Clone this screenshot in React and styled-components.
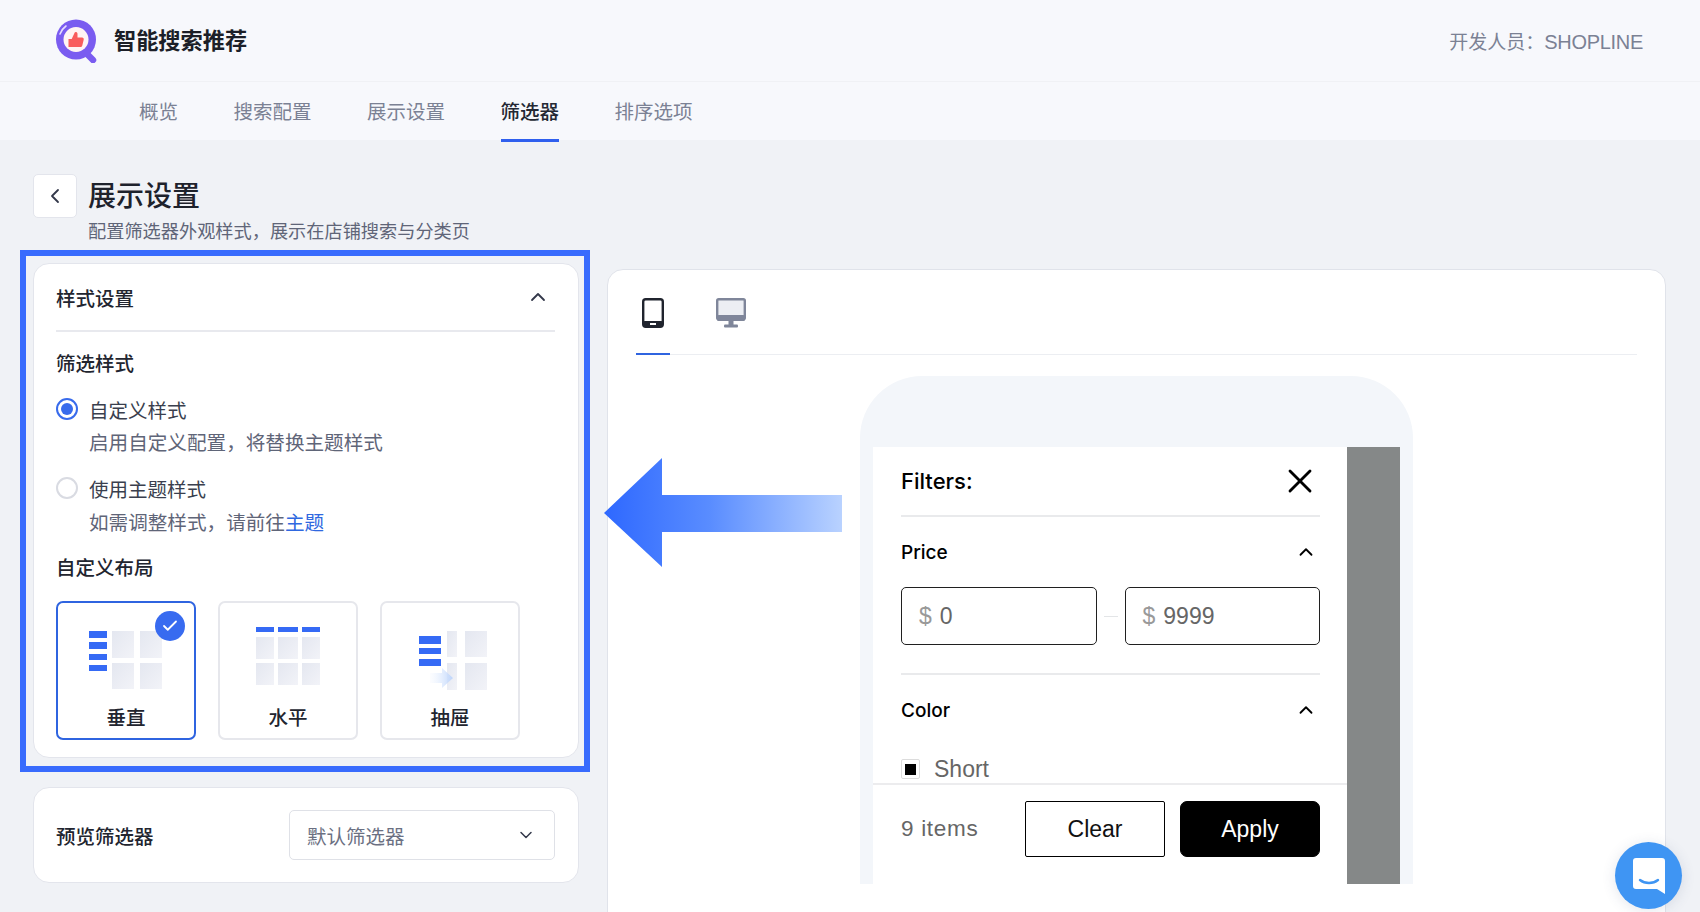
import React from 'react';
import styled, { createGlobalStyle } from 'styled-components';
import { ChevronUp, ChevronDown, ChevronLeft, X, Check } from 'lucide-react';

const cjk = '"Noto Sans CJK SC", "Noto Sans", sans-serif';
const latin = '"Liberation Sans", "Noto Sans CJK SC", sans-serif';

const GlobalStyle = createGlobalStyle`
  html, body { margin: 0; padding: 0; background: #f0f2f6; }
  body { font-family: ${cjk}; color: #20242e; }
  * { box-sizing: border-box; }
`;

const Page = styled.div`
  position: relative;
  width: 1700px;
  height: 912px;
  overflow: hidden;
  background: #f0f2f6;
`;

const TopBar = styled.header`
  height: 82px;
  padding: 0 57px 0 55px;
  display: flex;
  align-items: center;
  justify-content: space-between;
  background: #f7f8fc;
  border-bottom: 1px solid #f0f1f5;
`;

const Brand = styled.div`
  display: flex;
  align-items: center;
  gap: 15px;
  font-size: 22.2px;
  font-weight: 700;
  color: #1c1f28;
`;

const BrandName = styled.span`
  margin-bottom: 4px;
`;

const Developer = styled.div`
  font-size: 19px;
  color: #7b8194;
`;

const DeveloperName = styled.span`
  font-family: ${latin};
  font-size: 20px;
  letter-spacing: -0.3px;
`;

const TabBar = styled.nav`
  height: 58px;
  padding-left: 139px;
  display: flex;
  gap: 55.5px;
  background: #f7f8fc;
`;

const Tab = styled.div`
  position: relative;
  line-height: 58px;
  font-size: 19.5px;
  font-weight: ${(p) => (p.$active ? 500 : 400)};
  color: ${(p) => (p.$active ? '#242833' : '#7b8194')};
  border-bottom: 3px solid ${(p) => (p.$active ? '#2f5fee' : 'transparent')};
  height: 60px;
`;

const Main = styled.main`
  padding: 34px 0 0 20px;
  display: flex;
  align-items: flex-start;
  gap: 17px;
`;

const LeftColumn = styled.div`
  width: 570px;
  flex: none;
`;

const Heading = styled.div`
  height: 76px;
  margin-left: 13px;
  display: flex;
  gap: 11px;
`;

const BackButton = styled.div`
  width: 44px;
  height: 44px;
  display: flex;
  align-items: center;
  justify-content: center;
  background: #fff;
  border: 1px solid #e3e5ec;
  border-radius: 5px;
  color: #33384a;
`;

const HeadingTitle = styled.h1`
  margin: 0;
  font-size: 28px;
  line-height: 40px;
  font-weight: 500;
  color: #1e222c;
`;

const HeadingSub = styled.div`
  font-size: 18.2px;
  line-height: 26px;
  margin-top: 3px;
  color: #5f6578;
`;

const HighlightFrame = styled.div`
  border: 6px solid #386bfd;
  padding: 7px 5px 8px 7px;
`;

const Card = styled.section`
  background: #fff;
  border: 1px solid #e3e5ec;
  border-radius: 16px;
  padding: ${(p) => p.$padding};
`;

const CardHeader = styled.div`
  height: 68px;
  display: flex;
  align-items: center;
  justify-content: space-between;
  border-bottom: 2px solid #e8e9ee;
  padding-right: 5px;
`;

const Strong = styled.div`
  font-size: 19.5px;
  font-weight: 500;
  color: #22252f;
`;

const SectionTitle = styled(Strong)`
  line-height: 28px;
  margin-top: ${(p) => p.$top}px;
`;

const RadioRow = styled.div`
  display: flex;
  align-items: center;
  gap: 11px;
  height: 28px;
  margin-top: ${(p) => p.$top}px;
  font-size: 19.5px;
  color: #3a3f4e;
`;

const RadioDot = styled.span`
  width: 22px;
  height: 22px;
  border-radius: 50%;
  border: ${(p) => (p.$on ? '2px solid #386bec' : '2px solid #d9dbe2')};
  display: flex;
  align-items: center;
  justify-content: center;
  &::after {
    content: '';
    display: ${(p) => (p.$on ? 'block' : 'none')};
    width: 12px;
    height: 12px;
    border-radius: 50%;
    background: #386bec;
  }
`;

const RadioHint = styled.div`
  margin: ${(p) => p.$top}px 0 0 33px;
  font-size: 19.6px;
  line-height: 28px;
  color: #5f6578;
`;

const ThemeLink = styled.span`
  color: #2f68e0;
`;

const LayoutRow = styled.div`
  display: flex;
  gap: 22px;
  margin-top: 20px;
`;

const LayoutCard = styled.div`
  position: relative;
  width: 140px;
  height: 139px;
  border-radius: 7px;
  border: ${(p) => (p.$on ? '2px solid #2f64e0' : '2px solid #e6e7ec')};
  display: flex;
  flex-direction: column;
  align-items: center;
`;

const LayoutArt = styled.svg`
  display: block;
  margin-top: 20px;
  flex: none;
`;

const LayoutLabel = styled.div`
  margin-top: 0;
  font-size: 19.5px;
  line-height: 28px;
  font-weight: 500;
  color: #22252f;
`;

const CheckBadge = styled.span`
  position: absolute;
  top: 8px;
  right: 9px;
  width: 30px;
  height: 30px;
  border-radius: 50%;
  background: #386bf0;
  color: #fff;
  display: flex;
  align-items: center;
  justify-content: center;
`;

const PreviewCard = styled(Card)`
  margin: 15px 11px 0 13px;
  display: flex;
  align-items: center;
  justify-content: space-between;
  height: 96px;
`;

const SelectBox = styled.div`
  width: 266px;
  height: 50px;
  padding: 0 18px 0 17px;
  display: flex;
  align-items: center;
  justify-content: space-between;
  background: #fff;
  border: 1px solid #dfe1e7;
  border-radius: 5px;
  font-size: 19.5px;
  color: #6b7082;
`;

const PreviewPanel = styled.section`
  width: 1059px;
  height: 700px;
  margin-top: 95px;
  padding: 0 28px;
  background: #fff;
  border: 1px solid #e0e3ea;
  border-radius: 16px;
`;

const DeviceTabs = styled.div`
  height: 85px;
  display: flex;
  gap: 44px;
  border-bottom: 1px solid #eceef2;
`;

const DeviceTab = styled.div`
  width: 34px;
  height: 85px;
  padding-top: 28px;
  display: flex;
  justify-content: center;
  border-bottom: ${(p) => (p.$active ? '2px solid #2f64e0' : '0')};
`;

const PhoneFrame = styled.div`
  width: 553px;
  height: 508px;
  margin: 21px auto 0;
  padding: 71px 13px 0 13px;
  display: flex;
  background: #f3f6fa;
  border-radius: 62px 62px 0 0;
`;

const Drawer = styled.div`
  width: 474px;
  height: 100%;
  flex: none;
  display: flex;
  flex-direction: column;
  background: #fff;
  font-family: ${latin};
`;

const DrawerBody = styled.div`
  flex: 1;
  min-height: 0;
  overflow: hidden;
  padding: 0 27px 0 28px;
`;

const Backdrop = styled.div`
  width: 53px;
  background: #858888;
`;

const DrawerHead = styled.div`
  height: 70px;
  display: flex;
  align-items: center;
  justify-content: space-between;
  border-bottom: 2px solid #e9eaec;
`;

const DrawerTitle = styled.div`
  font-family: Inter, ${latin};
  font-size: 22px;
  font-weight: 500;
  color: #000;
`;

const FacetHead = styled.div`
  height: 70px;
  display: flex;
  align-items: center;
  justify-content: space-between;
  padding-right: 3px;
`;

const FacetTitle = styled.div`
  font-family: Inter, ${latin};
  font-size: 19px;
  font-weight: 500;
  color: #000;
`;

const PriceRow = styled.div`
  display: flex;
  align-items: center;
  padding-bottom: 28px;
  border-bottom: 2px solid #e9eaec;
`;

const PriceInput = styled.div`
  flex: 1;
  height: 58px;
  padding: 0 17px;
  display: flex;
  align-items: center;
  gap: 8px;
  border: 1.5px solid #202020;
  border-radius: 5px;
  font-size: 23px;
  color: #666;
`;

const PriceSign = styled.span`
  color: #999;
`;

const PriceDash = styled.span`
  width: 28px;
  height: 1px;
  padding: 0 7px;
  background: #e3e5e7;
  background-clip: content-box;
`;

const OptionRow = styled.div`
  display: flex;
  align-items: center;
  gap: 14px;
  margin-top: 10px;
  font-size: 23px;
  line-height: 28px;
  color: #666;
`;

const OptionBox = styled.span`
  width: 19px;
  height: 20px;
  flex: none;
  border: 1px solid #dcdcdc;
  border-radius: 2px;
  display: flex;
  align-items: center;
  justify-content: center;
  &::after {
    content: '';
    width: 11px;
    height: 11px;
    background: #000;
  }
`;

const DrawerFoot = styled.div`
  height: 101px;
  flex: none;
  padding: 16px 27px 0 28px;
  display: flex;
  align-items: flex-start;
  border-top: 2px solid #ececee;
`;

const ItemCount = styled.div`
  width: 124px;
  line-height: 56px;
  font-size: 22.5px;
  letter-spacing: 0.7px;
  color: #666;
`;

const FootButton = styled.div`
  width: 140px;
  height: 56px;
  margin-left: ${(p) => p.$left}px;
  display: flex;
  align-items: center;
  justify-content: center;
  font-size: 23px;
  border-radius: ${(p) => (p.$solid ? '7px' : '2px')};
  border: 1.5px solid #000;
  background: ${(p) => (p.$solid ? '#000' : '#fff')};
  color: ${(p) => (p.$solid ? '#fff' : '#111')};
`;

const BigArrow = styled.svg`
  position: absolute;
  left: 604px;
  top: 458px;
`;

const ChatBubble = styled.div`
  position: absolute;
  left: 1615px;
  top: 842px;
  width: 67px;
  height: 67px;
  border-radius: 50%;
  background: #3f95f3;
  box-shadow: 0 2px 14px rgba(60, 80, 120, 0.14);
  display: flex;
  align-items: center;
  justify-content: center;
`;

function Logo() {
  return (
    <svg width="44" height="44" viewBox="0 0 44 44">
      <path d="M31 34 L38 41" stroke="#7a5cf0" strokeWidth="6.5" strokeLinecap="round" />
      <circle cx="21" cy="20.5" r="20" fill="#7a5cf0" />
      <circle cx="21" cy="20.5" r="12.5" fill="#fff4f4" />
      <path d="M5 15 A17 17 0 0 1 11 7" stroke="#e6dcff" strokeWidth="1.6" fill="none" strokeLinecap="round" />
      <path
        d="M13.5 20 h3.2 l3-6.5 c.4-1 2.8-.7 2.8 1.4 v3.6 h4.5 c1.4 0 2 1 1.7 2.2 l-1.4 5.8 c-.3 1-1 1.5-2 1.5 H13.5 Z"
        fill="#f95d5d"
      />
    </svg>
  );
}

function Tile({ x, y, w, h }) {
  return <rect x={x} y={y} width={w} height={h} fill="url(#tile)" />;
}

function Bar({ x, y, w, h }) {
  return <rect x={x} y={y} width={w} height={h} fill="#356af5" />;
}

const artDefs = (
  <defs>
    <linearGradient id="tile" x1="0" y1="0" x2="1" y2="1">
      <stop offset="0" stopColor="#e4e7f0" />
      <stop offset="1" stopColor="#f2f3f8" />
    </linearGradient>
    <linearGradient id="nudge" x1="0" y1="0" x2="1" y2="0">
      <stop offset="0" stopColor="#eef4ff" stopOpacity="0.2" />
      <stop offset="1" stopColor="#bcd4fb" />
    </linearGradient>
  </defs>
);

function VerticalArt() {
  return (
    <LayoutArt width="136" height="80" viewBox="0 0 136 80">
      <Bar x="31" y="8" w="18" h="7" />
      <Bar x="31" y="19" w="18" h="7" />
      <Bar x="31" y="31" w="18" h="6" />
      <Bar x="31" y="42" w="18" h="6" />
      <Tile x="54" y="8" w="22" h="27" />
      <Tile x="82" y="8" w="22" h="27" />
      <Tile x="54" y="40" w="22" h="26" />
      <Tile x="82" y="40" w="22" h="26" />
    </LayoutArt>
  );
}

function HorizontalArt() {
  return (
    <LayoutArt width="136" height="80" viewBox="0 0 136 80">
      <Bar x="36" y="4" w="18" h="5" />
      <Bar x="58" y="4" w="20" h="5" />
      <Bar x="82" y="4" w="18" h="5" />
      <Tile x="36" y="14" w="18" h="22" />
      <Tile x="58" y="14" w="20" h="22" />
      <Tile x="82" y="14" w="18" h="22" />
      <Tile x="36" y="40" w="18" h="22" />
      <Tile x="58" y="40" w="20" h="22" />
      <Tile x="82" y="40" w="18" h="22" />
    </LayoutArt>
  );
}

function DrawerArt() {
  return (
    <LayoutArt width="136" height="80" viewBox="0 0 136 80">
      <Tile x="65" y="8" w="10" h="26" />
      <Tile x="83" y="8" w="22" h="26" />
      <Tile x="65" y="40" w="10" h="27" />
      <Tile x="83" y="40" w="22" h="27" />
      <Bar x="37" y="13" w="22" h="8" />
      <Bar x="37" y="25" w="22" h="6" />
      <Bar x="37" y="36" w="22" h="7" />
      <path d="M48 50 H60 V45 L71 55 L60 65 V60 H48 Z" fill="url(#nudge)" />
    </LayoutArt>
  );
}

function PhoneIcon() {
  return (
    <svg width="22" height="30" viewBox="0 0 22 30">
      <rect x="1.2" y="1.2" width="19.6" height="27.6" rx="2.5" fill="#fff" stroke="#20242e" strokeWidth="2.4" />
      <rect x="1" y="23" width="20" height="6" rx="1.5" fill="#20242e" />
      <rect x="8" y="25" width="6" height="2" fill="#fff" />
    </svg>
  );
}

function DesktopIcon() {
  return (
    <svg width="30" height="30" viewBox="0 0 30 30">
      <rect x="1.2" y="1.2" width="27.6" height="20" rx="1.5" fill="#eceef3" stroke="#7f869a" strokeWidth="2.4" />
      <rect x="1" y="17" width="28" height="6" rx="1.5" fill="#7f869a" />
      <rect x="12.5" y="23" width="5" height="4" fill="#7f869a" />
      <rect x="8" y="26.5" width="14" height="3" rx="1" fill="#7f869a" />
    </svg>
  );
}

function App() {
  return (
    <Page>
      <GlobalStyle />
      <TopBar>
        <Brand>
          <Logo />
          <BrandName>智能搜索推荐</BrandName>
        </Brand>
        <Developer>
          开发人员：<DeveloperName>SHOPLINE</DeveloperName>
        </Developer>
      </TopBar>
      <TabBar>
        <Tab>概览</Tab>
        <Tab>搜索配置</Tab>
        <Tab>展示设置</Tab>
        <Tab $active>筛选器</Tab>
        <Tab>排序选项</Tab>
      </TabBar>

      <Main>
        <LeftColumn>
          <Heading>
            <BackButton>
              <ChevronLeft size={24} strokeWidth={1.8} />
            </BackButton>
            <div>
              <HeadingTitle>展示设置</HeadingTitle>
              <HeadingSub>配置筛选器外观样式，展示在店铺搜索与分类页</HeadingSub>
            </div>
          </Heading>

          <HighlightFrame>
            <Card $padding="0 23px 17px 22px">
              <CardHeader>
                <Strong>样式设置</Strong>
                <ChevronUp size={24} strokeWidth={1.8} color="#33384a" />
              </CardHeader>
              <SectionTitle $top={17}>筛选样式</SectionTitle>
              <RadioRow $top={18}>
                <RadioDot $on />
                自定义样式
              </RadioRow>
              <RadioHint $top={5}>启用自定义配置，将替换主题样式</RadioHint>
              <RadioRow $top={18}>
                <RadioDot />
                使用主题样式
              </RadioRow>
              <RadioHint $top={6}>
                如需调整样式，请前往<ThemeLink>主题</ThemeLink>
              </RadioHint>
              <SectionTitle $top={17}>自定义布局</SectionTitle>
              <svg width="0" height="0" style={{ position: 'absolute' }}>
                {artDefs}
              </svg>
              <LayoutRow>
                <LayoutCard $on>
                  <VerticalArt />
                  <LayoutLabel>垂直</LayoutLabel>
                  <CheckBadge>
                    <Check size={18} strokeWidth={2.4} />
                  </CheckBadge>
                </LayoutCard>
                <LayoutCard>
                  <HorizontalArt />
                  <LayoutLabel>水平</LayoutLabel>
                </LayoutCard>
                <LayoutCard>
                  <DrawerArt />
                  <LayoutLabel>抽屉</LayoutLabel>
                </LayoutCard>
              </LayoutRow>
            </Card>
          </HighlightFrame>

          <PreviewCard $padding="0 23px 0 22px">
            <Strong>预览筛选器</Strong>
            <SelectBox>
              默认筛选器
              <ChevronDown size={20} strokeWidth={1.8} color="#33384a" />
            </SelectBox>
          </PreviewCard>
        </LeftColumn>

        <PreviewPanel>
          <DeviceTabs>
            <DeviceTab $active>
              <PhoneIcon />
            </DeviceTab>
            <DeviceTab>
              <DesktopIcon />
            </DeviceTab>
          </DeviceTabs>
          <PhoneFrame>
            <Drawer>
              <DrawerBody>
                <DrawerHead>
                  <DrawerTitle>Filters:</DrawerTitle>
                  <X size={40} strokeWidth={1.7} color="#000" />
                </DrawerHead>
                <FacetHead>
                  <FacetTitle>Price</FacetTitle>
                  <ChevronUp size={22} strokeWidth={2} color="#000" />
                </FacetHead>
                <PriceRow>
                  <PriceInput>
                    <PriceSign>$</PriceSign>0
                  </PriceInput>
                  <PriceDash />
                  <PriceInput>
                    <PriceSign>$</PriceSign>9999
                  </PriceInput>
                </PriceRow>
                <FacetHead>
                  <FacetTitle>Color</FacetTitle>
                  <ChevronUp size={22} strokeWidth={2} color="#000" />
                </FacetHead>
                <OptionRow>
                  <OptionBox />
                  Short
                </OptionRow>
              </DrawerBody>
              <DrawerFoot>
                <ItemCount>9 items</ItemCount>
                <FootButton>Clear</FootButton>
                <FootButton $left={15} $solid>
                  Apply
                </FootButton>
              </DrawerFoot>
            </Drawer>
            <Backdrop />
          </PhoneFrame>
        </PreviewPanel>
      </Main>

      <BigArrow width="240" height="110" viewBox="0 0 240 110">
        <defs>
          <linearGradient id="arrowFill" x1="0" y1="0" x2="1" y2="0">
            <stop offset="0" stopColor="#2e68ff" />
            <stop offset="0.45" stopColor="#5a8dff" />
            <stop offset="1" stopColor="#b9d2ff" />
          </linearGradient>
        </defs>
        <path d="M0 55 L58 0 V37 H238 V74 H58 V109 Z" fill="url(#arrowFill)" />
      </BigArrow>

      <ChatBubble>
        <svg width="34" height="40" viewBox="0 0 34 40">
          <path d="M4 2 H30 a3 3 0 0 1 3 3 V38 L25 33 H4 a3 3 0 0 1-3-3 V5 a3 3 0 0 1 3-3 Z" fill="#fff" />
          <path d="M8 24 C13 28 21 28 26 24" stroke="#3f95f3" strokeWidth="2.4" fill="none" strokeLinecap="round" />
        </svg>
      </ChatBubble>
    </Page>
  );
}

export default App;
